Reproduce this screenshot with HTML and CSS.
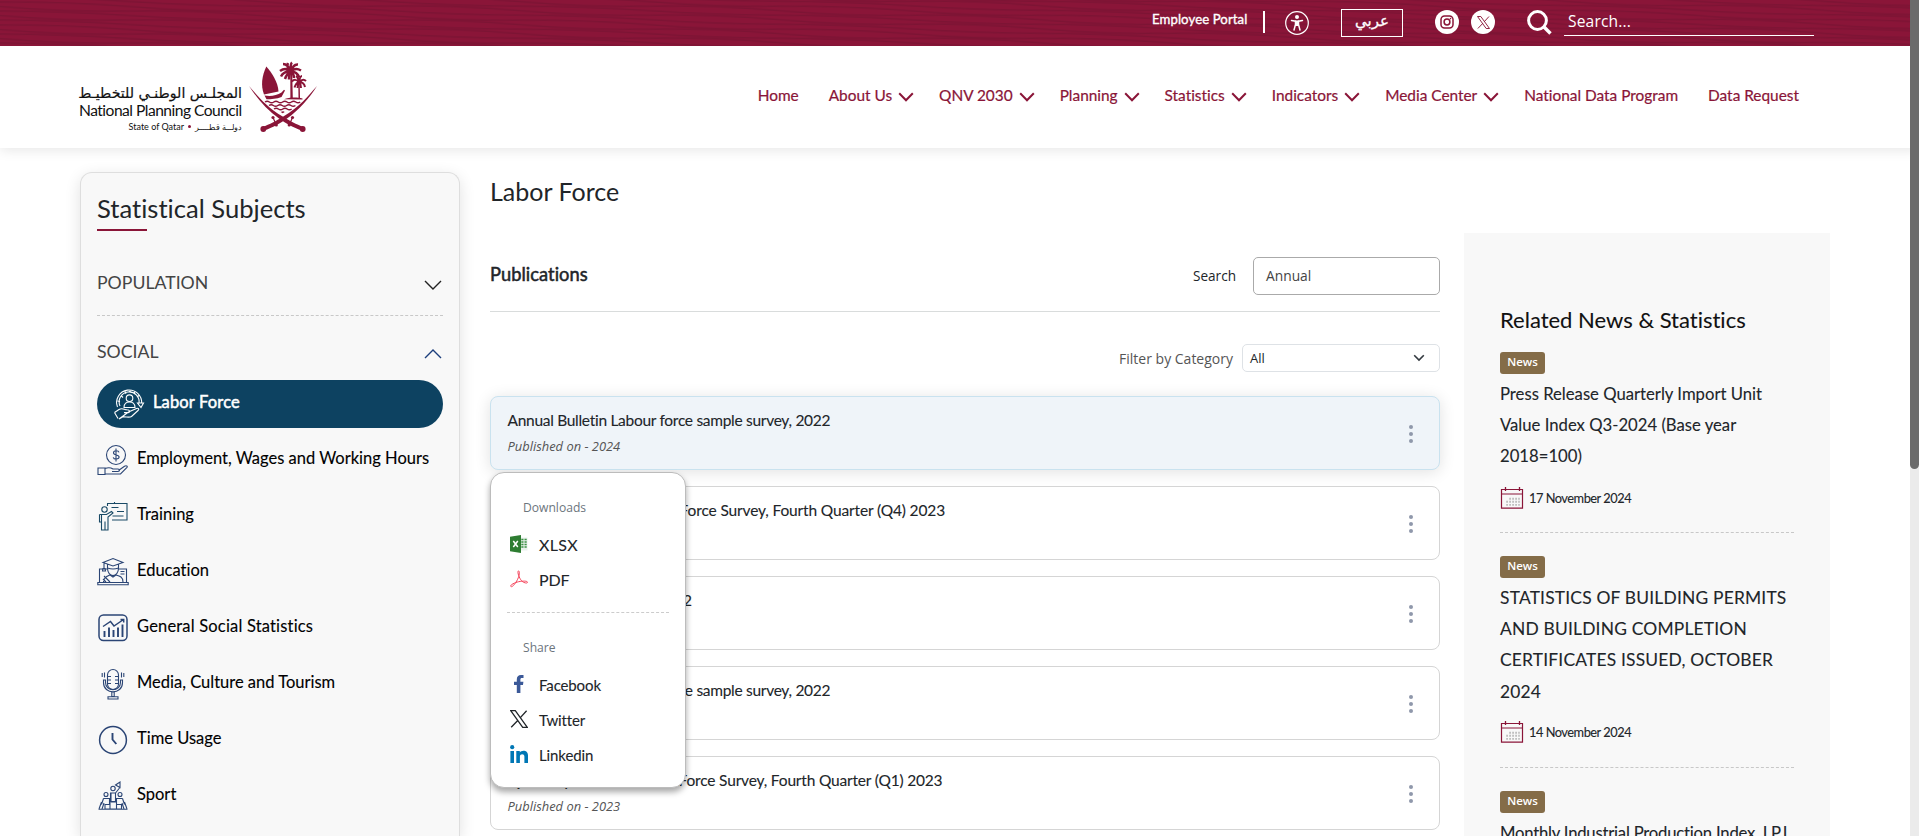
FILE: index.html
```
<!DOCTYPE html>
<html lang="en">
<head>
<meta charset="utf-8">
<title>Labor Force - National Planning Council</title>
<link rel="stylesheet" href="styles.css">
</head>
<body>
<svg class="defs" width="0" height="0">
  <symbol id="chev" viewBox="0 0 16 10"><path d="M1.2 1.2 8 8.2 14.8 1.2" fill="none" stroke="currentColor" stroke-width="2"/></symbol>
  <symbol id="chev-thin" viewBox="0 0 18 10"><path d="M1 1 9 9 17 1" fill="none" stroke="currentColor" stroke-width="1.4"/></symbol>
  <symbol id="x-logo" viewBox="0 0 18 18"><path d="M.7.7h4.6L17.3 17.3h-4.6ZM16.6.7 9.9 8.1M8 10.2 1.2 17.3" fill="none" stroke="currentColor" stroke-width="1.3"/></symbol>
  <symbol id="cal" viewBox="0 0 24 24">
    <g fill="none" stroke="#8a1538"><path d="M1.5 3.5h21v18.7h-21zM1.5 8h21" stroke-width="1.2"/><path d="M5.5 1v4M19.5 1v4" stroke-width="1.3"/></g>
    <path d="M9.500 12.700h10M6.500 15.800h13M6.500 18.900h13" stroke="#999" stroke-width="1.900" stroke-dasharray="1.100 1.900" fill="none"/>
  </symbol>
  <symbol id="dots" viewBox="0 0 4 20"><g fill="#8f98ab"><circle cx="2" cy="3" r="2"/><circle cx="2" cy="10" r="2"/><circle cx="2" cy="17" r="2"/></g></symbol>
</svg>

<header>
  <div class="topbar">
    <svg class="waves" width="1919" height="46"><defs><pattern id="w" width="260" height="23" patternUnits="userSpaceOnUse" patternTransform="rotate(2)">
      <path d="M0 2Q65-1 130 2T260 2M0 6.500Q65 10 130 6.500T260 6.500M0 11Q65 9 130 11T260 11M0 15.500Q65 19 130 15.500T260 15.500M0 20Q65 18 130 20T260 20" fill="none" stroke="#6f1230" stroke-width="1.300"/></pattern></defs><rect width="1919" height="46" fill="url(#w)" opacity=".5"/></svg>
    <div class="topbar-row">
      <a class="portal">Employee Portal</a>
      <span class="sep"></span>
      <svg class="a11y" width="24" height="24" viewBox="0 0 24 24"><circle cx="12" cy="12" r="11.300" fill="none" stroke="#fff" stroke-width="1.200"/><circle cx="12" cy="6" r="2" fill="#fff"/><path d="M6.500 9.500 10.500 10.200V13.500L9 19M17.500 9.500 13.500 10.200V13.500L15 19" fill="none" stroke="#fff" stroke-width="1.500" stroke-linecap="round"/><path d="M10 9.500h4v5.500h-4z" fill="#fff"/></svg>
      <a class="lang" lang="ar" dir="rtl">عربي</a>
      <svg class="insta" width="24" height="24" viewBox="0 0 24 24"><circle cx="12" cy="12" r="12" fill="#fff"/><rect x="6" y="6" width="12" height="12" rx="3.500" fill="none" stroke="#8a1538" stroke-width="1.500"/><circle cx="12" cy="12" r="2.900" fill="none" stroke="#8a1538" stroke-width="1.500"/><circle cx="15.500" cy="8.600" r=".8" fill="#8a1538"/></svg>
      <span class="xcircle"><svg width="13" height="13"><use href="#x-logo"/></svg></span>
      <svg class="mag" width="25" height="25" viewBox="0 0 25 25"><circle cx="10.500" cy="10.500" r="8.900" fill="none" stroke="#fff" stroke-width="3"/><path d="M16.800 16.800 23.500 23.500" stroke="#fff" stroke-width="3.400"/></svg>
      <span class="search-field">Search...</span>
    </div>
  </div>
  <div class="mainbar">
    <div class="brand">
      <div class="brand-text">
        <div class="brand-ar" dir="rtl" lang="ar">المجلـس الوطنـي للتخطيـط</div>
        <div class="brand-en">National Planning Council</div>
        <div class="brand-sub"><span>State of Qatar</span><i></i><span class="sub-ar" dir="rtl" lang="ar">دولـــة قطـــــر</span></div>
      </div>
      <svg class="emblem" width="70" height="73" viewBox="0 0 70 73">
        <g fill="#8a1538">
          <path d="M18.300 6.500C14 16 12.500 25 16 34.500L30.500 31.500C30 22 24 13 18.300 6.500Z"/>
          <path d="M16.500 35.500c6 1 12 .3 17-3l2.500-2.700 1 .7-3.500 6.500c-5 2-10 2.200-15 2.200z"/>
          <path d="M42.300 13h1.900l.6 25.500h-2.400zM50.300 23h1.400l.3 15h-1.500z"/>
          <path d="M36 39.200c5-2.200 13-2.200 18.500-.8v1z"/>
          <path d="M1 26C10 36 19 47.500 34.700 56.500c8 5 13 7.500 21 10.500l-2 3.500C44 67 38 63.500 31 58.500 19 50 9 38.500 1 26Z"/>
          <path d="M69 26C60 36 51 47.500 35.300 56.500c-8 5-13 7.500-21 10.500l2 3.500C26 67 32 63.500 39 58.500 51 50 61 38.500 69 26Z"/>
          <circle cx="15.300" cy="69" r="2.900"/><circle cx="54.700" cy="69" r="2.900"/>
          <circle cx="25" cy="57.500" r="1.600"/><circle cx="28.300" cy="65" r="1.600"/><circle cx="44.500" cy="57.500" r="1.600"/><circle cx="41.200" cy="65" r="1.600"/>
          <path d="M32.700 52c2-1 3-1 4 0l-2 1.200z"/>
        </g>
        <g fill="none" stroke="#8a1538">
          <path stroke-width="1.200" d="M25 57.500 28.300 65M44.500 57.500 41.200 65"/>
          <path stroke-width="1.500" d="M17 42q2.200-1.500 4.400 0t4.400 0 4.400 0 4.400 0 4.400 0 4.400 0 4.400 0 4.400 0M21 45.500q2.200-1.500 4.400 0t4.400 0 4.400 0 4.400 0 4.400 0 4.400 0M26 49q2.200-1.500 4.400 0t4.400 0 4.400 0 4.400 0"/>
          <path stroke-width="2.500" d="M43 12q-5-5.500-11-1M43 12q-3-8-8-8M43 12q-1-8 1-9.500M43 12q2-8 7-7.500M43 12q4-5 10-1.500M43 12q-7-1.500-10 4.500M43 12q-4 1-6 7M43 12q5-1 8.500 5.500M43 12q-2 2-2 7.500M43 12q3 2 3 6M43 12q-5-5-3-9"/>
          <path stroke-width="2" d="M51 22q-4-4-7-.5M51 22q-3 1-4.500 5.500M51 22q-1-5-3-6M51 22q1-6 3-6M51 22q4-4 7-1M51 22q5 0 6 5M51 22q2 2 2 6M51 22q-1 2-1.500 6"/>
        </g>
      </svg>
    </div>
    <nav class="nav">
      <a>Home</a>
      <a class="has">About Us<svg><use href="#chev"/></svg></a>
      <a class="has">QNV 2030<svg><use href="#chev"/></svg></a>
      <a class="has">Planning<svg><use href="#chev"/></svg></a>
      <a class="has">Statistics<svg><use href="#chev"/></svg></a>
      <a class="has">Indicators<svg><use href="#chev"/></svg></a>
      <a class="has">Media Center<svg><use href="#chev"/></svg></a>
      <a>National Data Program</a>
      <a>Data Request</a>
    </nav>
  </div>
</header>

<main class="page">
  <aside class="subjects">
    <h2>Statistical Subjects</h2>
    <div class="group first"><span>POPULATION</span><svg width="18" height="10"><use href="#chev-thin"/></svg></div>
    <div class="group"><span>SOCIAL</span><svg class="open" width="18" height="10"><use href="#chev-thin"/></svg></div>
    <a class="subject active">
      <svg width="32" height="32" viewBox="0 0 32 32"><circle cx="16.500" cy="10.200" r="3.300"/><path d="M11 19.500c0-7.500 11-7.500 11 0zM4.500 19A12.500 12.500 0 1 1 28.600 15.500M7 18A10 10 0 1 1 26 15.500M24.500 15h6l-2.500 4.500zM1.500 24.500 6 21.500c3-2 5 0 8 .3 3 0 3.500 2.500 1 2.800h-4M15.500 24l8-3.500c2-.8 3 .8 1.500 2l-6.500 6c-2 1.500-6 0-9 .5l-3.500 2zM1.500 24.500l3.500 6M8 7.500l2 2M12 3.500l1 2.300M17 2v2.500M22 3.500l-1 2.300M26 7.500l-2 1.500M4.500 13l2.500.5"/></svg>
      <span>Labor Force</span></a>
    <a class="subject">
      <svg width="32" height="32" viewBox="0 0 32 32"><circle cx="19" cy="11" r="9.500"/><path d="M22 8.300c-.6-2.200-5.500-2-5.500.5 0 3 5.600 1.300 5.600 4.300 0 2.600-5.300 2.600-5.900.2M19 4.500v13M1 24h7v6.500H1zM8 24.500c4-1.500 6-.8 8 .5h5c2 0 2 2.500 0 2.500h-6M21.500 26.500l6-4.200c1.500-1 3.500-.3 2.500 1l-6.500 6.700H8"/></svg>
      <span>Employment, Wages and Working Hours</span></a>
    <a class="subject teal">
      <svg width="32" height="32" viewBox="0 0 32 32"><path d="M10 3.500h20V20H15M17.500 2v1.500M14.500 7.500h7M15.500 16h11M20 11.500h7"/><circle cx="7.500" cy="9.500" r="2.700"/><path d="M2.500 14.500h7l5-3 1.500 1.500-5 4V30H8v-8.500V30H4.500V15M2.500 14.500V22h2M10.500 6V3.500"/></svg>
      <span>Training</span></a>
    <a class="subject">
      <svg width="32" height="32" viewBox="0 0 32 32"><path d="M6 6.500 16 2.500l10 4-10 3.500zM10.500 8.500v3.500q5.500 2 11 0V8.500M10.500 12c0 10 11 10 11 0M7 7.500v5M6 12l-.5 3h3L8 12M10.500 13H2.500v13M21.500 13h8v13M.8 26.500h30.400v2.200H.8zM6.500 26c0-5 4-6 6.500-7l3 2 3-2c4 1 7 2 7 7M7 20l6 6M6 23l3 3M23.500 15.500h4M23.500 18h4"/></svg>
      <span>Education</span></a>
    <a class="subject gss">
      <svg width="32" height="32" viewBox="0 0 32 32"><rect x="2" y="3" width="28" height="25.500" rx="4.500" stroke-width="1.500"/><path stroke-width="1.500" d="M6 14.500 13.500 9.500 17 14 26.500 7.500M23.500 7.500h3.200v3"/><path stroke-width="1.900" d="M7.500 19v6M12 15.500V25M16.500 18v7M21 15.500V25M25.500 12.500V25"/></svg>
      <span>General Social Statistics</span></a>
    <a class="subject">
      <svg width="32" height="32" viewBox="0 0 32 32"><rect x="10.500" y="1.500" width="11" height="20" rx="5.500"/><path d="M6.500 12v2.500c0 12.500 19 12.500 19 0V12h-2v2.500c0 9.500-15 9.500-15 0V12zM14.800 24v4.500h2.400V24M11 31v-2.300h10V31zM10.500 8.500h3.500M10.500 12h3.500M10.500 15.500h3.500M18 8.500h3.500M18 12h3.500M18 15.500h3.500M7.500 4.500v5M5.200 5v4M24.500 4.500v5M26.800 5v4"/></svg>
      <span>Media, Culture and Tourism</span></a>
    <a class="subject">
      <svg width="32" height="32" viewBox="0 0 32 32"><circle cx="16" cy="16" r="13.400" stroke-width="1.500"/><path stroke-width="1.900" d="M15.500 9v6.500l3.800 4.500"/></svg>
      <span>Time Usage</span></a>
    <a class="subject">
      <svg width="32" height="32" viewBox="0 0 32 32"><circle cx="16" cy="8.500" r="2.200"/><path d="M13.500 22v-9h5l4-5M18.500 5l4.500-3v5.500zM14 13v9h4.500v-9"/><circle cx="9" cy="14.500" r="2"/><circle cx="23" cy="14.500" r="2"/><path d="M6.500 18.500h6v6M25.500 18.500h-6v6M6.500 18.500l-2 6M25.500 18.500l2 6M13 21.500h6.500V29H13zM8 24.500h5V29H8zM19.500 24.500h5V29h-5zM1.500 29.300h29M4.500 22l-2.500 7M27.500 22l2.500 7M5 29l2-6M27 29l-2-6"/></svg>
      <span>Sport</span></a>
  </aside>

  <section class="content">
    <h1>Labor Force</h1>
    <div class="pub-head"><h3>Publications</h3><label>Search</label><div class="pub-search">Annual</div></div>
    <div class="filter"><label>Filter by Category</label><div class="select"><span>All</span><svg width="12" height="8" viewBox="0 0 12 8"><path d="M1.200 1.200 6 6 10.800 1.200" fill="none" stroke="#343a40" stroke-width="1.600"/></svg></div></div>
    <div class="cards">
      <article class="card active"><div><h4>Annual Bulletin Labour force sample survey, 2022</h4><p>Published on - 2024</p></div><svg width="4" height="20"><use href="#dots"/></svg>
        <div class="menu">
          <h5>Downloads</h5>
          <a class="xlsx"><svg width="18" height="18" viewBox="0 0 18 18"><path d="M11 2.500h6.500v13H11z" fill="#e9f1ec"/><path d="M11.300 4.500h5.700M11.300 7h5.700M11.300 9.500h5.700M11.300 12h5.700" stroke="#3c9144" stroke-width="1.300" stroke-dasharray="2.200 1"/><path d="M0 1.800 11 0v18L0 16.200z" fill="#2e7d32"/><path d="M3.300 6 7.800 12M7.800 6 3.300 12" stroke="#fff" stroke-width="1.500"/></svg>XLSX</a>
          <a class="pdf"><svg width="18" height="18" viewBox="0 0 18 18"><path d="M.7 16.300c-.5-1.500 4-3.700 8-4.600 4-.8 8.800-.9 8.800.6 0 1.400-4 .7-6-1.600C9.500 8.500 7 2.200 8.300 1 9.800.2 9.800 5 7.600 9.300 5.500 13.500 2 18 .7 16.300Z" fill="none" stroke="#f5455c" stroke-width="1"/></svg>PDF</a>
          <hr>
          <h5>Share</h5>
          <a><svg width="18" height="18" viewBox="0 0 18 18"><path d="M6.800 18V10H4V6.800h2.800V4.500C6.800 1.600 8.300 0 11 0h2.500v3h-1.600c-1.200 0-1.500.5-1.500 1.600v2.200h3L13 10h-2.600v8z" fill="#3b5998"/></svg>Facebook</a>
          <a><svg width="18" height="18"><use href="#x-logo"/></svg>Twitter</a>
          <a><svg width="18" height="18" viewBox="0 0 18 18"><g fill="#0077b5"><circle cx="2.200" cy="2.200" r="2.100"/><path d="M.4 6H4v12H.4zM6.300 6h3.500v1.600C11 5.200 18 4.500 18 10.500V18h-3.600v-6.500c0-3.200-4.500-3-4.500 0V18H6.300z"/></g></svg>Linkedin</a>
        </div>
      </article>
      <article class="card"><div><h4 class="q4">Quarterly Bulletin Labour Force Survey, Fourth Quarter (Q4) 2023</h4><p>Published on - 2024</p></div><svg width="4" height="20"><use href="#dots"/></svg></article>
      <article class="card"><div><h4 class="wide">Annual Labour Force, 2022</h4><p>Published on - 2023</p></div><svg width="4" height="20"><use href="#dots"/></svg></article>
      <article class="card"><div><h4>Annual Bulletin Labour force sample survey, 2022</h4><p>Published on - 2023</p></div><svg width="4" height="20"><use href="#dots"/></svg></article>
      <article class="card"><div><h4 class="q1">Quarterly Bulletin Labour Force Survey, Fourth Quarter (Q1) 2023</h4><p>Published on - 2023</p></div><svg width="4" height="20"><use href="#dots"/></svg></article>
    </div>
  </section>

  <aside class="news">
    <h2>Related News &amp; Statistics</h2>
    <article><span class="badge">News</span><p>Press Release Quarterly Import Unit<br>Value Index Q3-2024 (Base year<br>2018=100)</p><div class="date"><svg width="24" height="24"><use href="#cal"/></svg>17 November 2024</div></article>
    <article><span class="badge">News</span><p class="caps">STATISTICS OF BUILDING PERMITS<br>AND BUILDING COMPLETION<br>CERTIFICATES ISSUED, OCTOBER<br>2024</p><div class="date"><svg width="24" height="24"><use href="#cal"/></svg>14 November 2024</div></article>
    <article><span class="badge">News</span><p class="tight">Monthly Industrial Production Index, I.P.I</p></article>
  </aside>
</main>
<div class="scrollbar"><div class="thumb"></div></div>
</body>
</html>
```

FILE: styles.css
```
* { box-sizing: border-box; margin: 0; padding: 0; }
html { overflow: hidden; }
body { position: relative; height: 836px; overflow: hidden; background: #fff; color: #212529; font-family: Lato, "Noto Sans", sans-serif; font-variant-ligatures: none; }
.defs { position: absolute; }
svg { display: block; flex: none; }

/* Top bar */
.topbar { position: relative; height: 46px; background: #8a1538; color: #fff; }
.waves { position: absolute; left: 0; top: 0; }
.topbar-row { position: relative; display: flex; padding-left: 1152px; }
.portal { width: 111px; padding-top: 11px; font-size: 13.2px; line-height: 16px; -webkit-text-stroke: .35px #fff; white-space: nowrap; letter-spacing: .08px; }
.sep { width: 2px; height: 22px; margin-top: 11px; background: #fff; }
.a11y { margin: 11px 0 0 20px; }
.lang { width: 62px; height: 28px; margin: 9px 0 0 32px; border: 1px solid #fff; text-align: center; font: 15px/22px "DejaVu Sans", sans-serif; -webkit-text-stroke: .3px #fff; }
.insta { margin: 10px 0 0 32px; }
.xcircle { display: flex; align-items: center; justify-content: center; width: 24px; height: 24px; margin: 10px 0 0 12px; border-radius: 50%; background: #fff; color: #8a1538; }
.mag { margin: 10px 0 0 32px; }
.search-field { width: 250px; height: 36px; margin-left: 12px; padding: 11px 4px 0; border-bottom: 1px solid #fff; font: 15.6px/20px "Open Sans", sans-serif; letter-spacing: .15px; }

/* Main bar */
.mainbar { display: flex; justify-content: space-between; height: 102px; padding: 0 120px 0 79px; background: #fff; box-shadow: 0 2px 12px rgba(0,0,0,.1); }
.brand { display: flex; padding-top: 14px; }
.brand-text { width: 163px; padding-top: 24px; color: #111; white-space: nowrap; }
.brand-ar { height: 16px; font: 14.1px/19px "DejaVu Sans", sans-serif; -webkit-text-stroke: .2px #111; }
.brand-en { height: 20px; font-size: 15.6px; line-height: 20px; letter-spacing: -.52px; }
.brand-sub { display: flex; align-items: center; justify-content: flex-end; gap: 4px; height: 13px; font-size: 9px; line-height: 12px; }
.brand-sub i { width: 3px; height: 3px; border-radius: 50%; background: #8a1538; }
.sub-ar { font-size: 8px; }
.emblem { margin-left: 6px; }
.nav { display: flex; padding-top: 40px; color: #8a1538; font-size: 15.4px; line-height: 19px; -webkit-text-stroke: .2px #8a1538; white-space: nowrap; }
.nav a { display: flex; margin-left: 30px; }
.nav a svg { width: 16px; height: 10px; margin: 6px 0 0 6px; }
.nav a.has + a { margin-left: 25px; }

/* Page columns */
.page { display: flex; align-items: flex-start; padding-left: 80px; }
.subjects { width: 380px; height: 664px; margin-top: 24px; padding: 20px 16px 0; border: 1px solid #dedede; border-bottom: 0; border-radius: 12px 12px 0 0; background: #f8f8f8; box-shadow: 0 4px 16px rgba(0,0,0,.12); }
.subjects h2 { position: relative; height: 39px; font-size: 25.6px; line-height: 30px; font-weight: 400; }
.subjects h2::after { content: ""; position: absolute; left: 0; bottom: 1px; width: 50px; height: 2px; background: #8a1538; }
.group { display: flex; justify-content: space-between; height: 64px; padding-top: 24px; color: #444; font-size: 17.7px; line-height: 24px; }
.group svg { margin: 9px 1px 0 0; color: #222; }
.group .open { transform: scaleY(-1); color: #1c3e7c; }
.group.first { height: 84px; padding-top: 39px; border-bottom: 1px dashed #c8c8c8; }
.subject { display: flex; height: 56px; padding-top: 12px; font-size: 16.5px; color: #000; line-height: 22px; -webkit-text-stroke: .12px #000; }
.subject svg { fill: none; stroke: #2b4575; stroke-width: 1.1; }
.subject.teal svg { stroke: #1a4a66; }
.subject.gss { letter-spacing: .18px; }
.subject span { padding-top: 3px; margin-left: 8px; white-space: nowrap; }
.subject.active { height: 48px; padding: 8px 0 0 16px; border-radius: 24px; background: #0d4261; color: #fff; -webkit-text-stroke: .5px #fff; letter-spacing: .15px; margin-bottom: 4px; }
.subject.active svg { stroke: #fff; }
.subject.active span { padding-top: 3px; }

.content { width: 950px; margin-left: 30px; padding-top: 28px; }
.content h1 { height: 81px; font-size: 25px; line-height: 30px; font-weight: 400; }
.pub-head { display: flex; height: 55px; border-bottom: 1px solid #d9dcdc; }
.pub-head h3 { flex: 1; padding-top: 6px; font-size: 18.3px; line-height: 22px; font-weight: 400; letter-spacing: .05px; -webkit-text-stroke: .5px #212529; }
.pub-head label { padding-top: 8px; font: 13.6px/22px "Open Sans", sans-serif; }
.pub-search { width: 187px; height: 38px; margin-left: 17px; padding: 7px 12px; border: 1px solid #aaa; border-radius: 5px; font: 13.8px/22px "Open Sans", sans-serif; color: #444; }
.filter { display: flex; justify-content: flex-end; height: 84px; padding-top: 32px; color: #555; font: 14px/30px "Open Sans", sans-serif; }
.select { display: flex; justify-content: space-between; align-items: center; width: 198px; height: 28px; margin-left: 9px; padding: 0 14px 0 7px; border: 1px solid #dee2e6; border-radius: 5px; color: #212529; font-size: 13px; }
.cards { display: flex; flex-direction: column; gap: 16px; height: 440px; }
.card { position: relative; display: flex; flex: none; justify-content: space-between; align-items: center; height: 74px; padding: 0 26px 0 16.5px; border: 1px solid #d5d5d5; border-radius: 8px; background: #fff; }
.card > svg { margin-top: 2px; }
.card.active { background: #eff4f9; border-color: #c9e2ef; box-shadow: 0 2px 16px rgba(0,0,0,.12); }
.card h4 { margin-top: -2px; font-size: 15.5px; line-height: 22px; font-weight: 400; letter-spacing: -.29px; white-space: nowrap; -webkit-text-stroke: .1px #212529; }
.card h4.q4 { letter-spacing: -.14px; }
.card h4.q1 { letter-spacing: -.18px; }
.card h4.wide { word-spacing: 2.5px; }
.card p { padding-top: 5px; font: italic 12.9px/20px "Open Sans", sans-serif; color: #555; }
.menu { position: absolute; z-index: 5; left: -1px; top: 75px; width: 196px; height: 316px; padding: 24px 16px 0; border: 1px solid #bcbcbc; border-radius: 14px; background: #fff; box-shadow: 0 4px 6px rgba(0,0,0,.35); }
.menu h5 { height: 30px; padding-left: 16px; font: 12.1px/22px "Open Sans", sans-serif; color: #6c757d; }
.menu a { display: flex; align-items: center; gap: 11px; height: 35px; padding-left: 3px; font-size: 15px; line-height: 20px; letter-spacing: -.12px; -webkit-text-stroke: .1px #212529; }
.menu a.xlsx { font-size: 16px; letter-spacing: .3px; }
.menu a.pdf { font-size: 16px; }
.menu a svg { margin-top: -2px; }
.menu hr { border: 0; border-top: 1px dashed #ccc; margin: 15px 0 24px; }

.news { width: 366px; height: 603px; margin: 85px 0 0 24px; padding: 72px 36px 0; background: #f8f8f8; overflow: hidden; }
.news h2 { height: 47px; font-size: 22px; line-height: 30px; font-weight: 400; color: #111; -webkit-text-stroke: .1px #111; white-space: nowrap; }
.news article { height: 181px; border-bottom: 1px dashed #c8c8c8; white-space: nowrap; }
.news article + article { height: 235px; padding-top: 23px; }
.badge { display: block; width: 45px; height: 22px; border-radius: 3px; background: #846c48; color: #fff; font: 600 11.5px/20px "Open Sans", sans-serif; text-align: center; }
.news p { padding: 5px 0 13px; font-size: 16.7px; line-height: 31.2px; -webkit-text-stroke: .1px #212529; }
.news p.caps { padding-top: 4px; font-size: 17.4px; letter-spacing: .2px; }
.news p.tight { letter-spacing: -.22px; }
.date { display: flex; gap: 5px; font-size: 12.8px; line-height: 24px; letter-spacing: -.48px; -webkit-text-stroke: .1px #212529; }

/* Scrollbar */
.scrollbar { position: absolute; top: 0; right: 0; width: 9px; height: 836px; background: #ebebeb; z-index: 9; }
.thumb { height: 469px; background: #6b6b6b; border-radius: 0 0 5px 5px; }
```
